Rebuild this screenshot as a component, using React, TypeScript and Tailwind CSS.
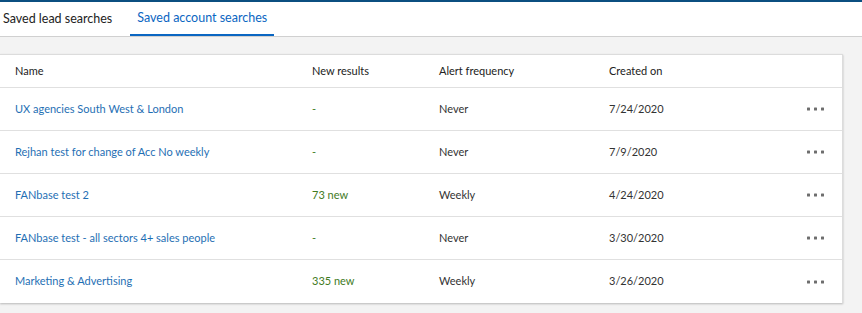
import React from 'react';

type SavedSearch = {
  name: string;
  newResults: string;
  frequency: string;
  created: string;
};

const searches: SavedSearch[] = [
  { name: 'UX agencies South West & London', newResults: '-', frequency: 'Never', created: '7/24/2020' },
  { name: 'Rejhan test for change of Acc No weekly', newResults: '-', frequency: 'Never', created: '7/9/2020' },
  { name: 'FANbase test 2', newResults: '73 new', frequency: 'Weekly', created: '4/24/2020' },
  { name: 'FANbase test - all sectors 4+ sales people', newResults: '-', frequency: 'Never', created: '3/30/2020' },
  { name: 'Marketing & Advertising', newResults: '335 new', frequency: 'Weekly', created: '3/26/2020' },
];

const MoreDots = () => (
  <svg width="17" height="4" viewBox="0 0 17 4" className="text-[#6e6e6e]">
    <rect x="0" y="0.5" width="3" height="3" rx="0.5" fill="currentColor" />
    <rect x="7" y="0.5" width="3" height="3" rx="0.5" fill="currentColor" />
    <rect x="14" y="0.5" width="3" height="3" rx="0.5" fill="currentColor" />
  </svg>
);

export default function App() {
  return (
    <div
      className="w-[862px] h-[313px] bg-[#f3f3f3] overflow-hidden"
      style={{ fontFamily: 'Lato, "Open Sans", sans-serif' }}
    >
      {/* tabs */}
      <div className="h-[37px] bg-white border-t-2 border-t-[#0b4f80] border-b border-b-[#d0d0d0] flex items-end pl-[3px] text-[12.5px]">
        <button className="h-[34px] pr-[18px] text-[#222] flex items-center">Saved lead searches</button>
        <button className="h-[34px] px-[7px] text-[#0a66c2] border-b-2 border-[#0a66c2] flex items-center">
          Saved account searches
        </button>
      </div>

      <div className="pt-[17px] pr-[19px]">
        <div className="bg-white border-t border-r border-[#dcdcdc] shadow-[0_1px_2px_rgba(0,0,0,0.25)] text-[11px]">
          <div className="h-[33px] grid grid-cols-[297px_127px_170px_1fr_35px] items-center pl-[15px] border-b border-[#e0e0e0] text-[#222]">
            <span>Name</span>
            <span>New results</span>
            <span>Alert frequency</span>
            <span>Created on</span>
            <span />
          </div>
          {searches.map((s, i) => (
            <div
              key={s.name}
              className={`h-[43px] grid grid-cols-[297px_127px_170px_1fr_35px] items-center pl-[15px] ${
                i < searches.length - 1 ? 'border-b border-[#e0e0e0]' : ''
              }`}
            >
              <a className="text-[#1f6fb4] cursor-pointer">{s.name}</a>
              <span className="text-[#3f7b1e]">{s.newResults}</span>
              <span className="text-[#333]">{s.frequency}</span>
              <span className="text-[#333]">{s.created}</span>
              <span className="flex items-center">
                <MoreDots />
              </span>
            </div>
          ))}
        </div>
      </div>
    </div>
  );
}
